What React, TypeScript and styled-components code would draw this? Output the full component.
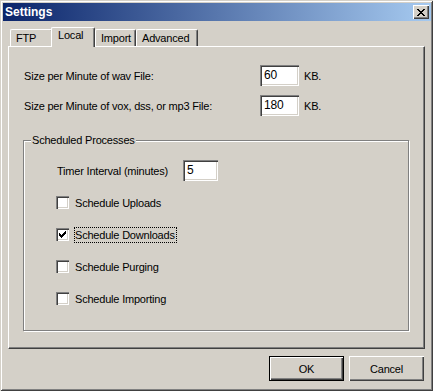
import React from 'react';
import styled, { createGlobalStyle, css } from 'styled-components';

const Global = createGlobalStyle`
  html, body { margin: 0; padding: 0; background: #d4d0c8; }
  body { font-family: "Liberation Sans", Arial, sans-serif; font-size: 11px; letter-spacing: -0.2px; color: #000; }
  * { box-sizing: border-box; }
`;

const FACE = '#d4d0c8';

const Window = styled.div`
  width: 433px;
  height: 391px;
  background: ${FACE};
  padding: 3px 2px 2px 3px;
  display: flex;
  flex-direction: column;
  box-shadow: inset 1px 1px ${FACE}, inset -1px -1px #404040, inset 2px 2px #fff, inset -2px -2px #808080;
`;

const TitleBar = styled.div`
  height: 18px;
  display: flex;
  align-items: center;
  padding: 0 2px 0 2px;
  background: linear-gradient(to right, #0a246a, #a6caf0);
  color: #fff;
  font-weight: bold;
  font-size: 12px;
  letter-spacing: 0;
`;

const TitleText = styled.span`
  flex: 1;
  line-height: 14px;
`;

const CloseButton = styled.div`
  width: 16px;
  height: 14px;
  background: ${FACE};
  display: flex;
  align-items: center;
  justify-content: center;
  box-shadow: inset 1px 1px #fff, inset -1px -1px #404040, inset -2px -2px #808080;
`;

const Body = styled.div`
  flex: 1;
  display: flex;
  flex-direction: column;
  padding: 6px 6px 0 5px;
`;

const TabStrip = styled.div`
  height: 19px;
  display: flex;
  align-items: flex-end;
  padding-left: 2px;
`;

const Tab = styled.div<{ $active?: boolean; $w: number }>`
  width: ${(p) => p.$w}px;
  height: 17px;
  padding: 2px 0 0 5px;
  border-top: 1px solid #fff;
  border-left: 1px solid #fff;
  border-right: 1px solid #404040;
  border-radius: 2px 2px 0 0;
  box-shadow: inset -1px 0 #808080;
  background: ${FACE};
  line-height: 13px;
  white-space: nowrap;
  ${(p) =>
    p.$active &&
    css`
      height: 20px;
      margin: 0 0 -1px -2px;
      padding: 1px 0 0 6px;
      position: relative;
      z-index: 1;
    `}
`;

const Panel = styled.div`
  width: 417px;
  height: 303px;
  border-top: 1px solid #fff;
  border-left: 1px solid #fff;
  border-right: 1px solid #404040;
  border-bottom: 1px solid #404040;
  box-shadow: inset -1px -1px #808080;
  padding: 18px 0 0 14px;
  display: flex;
  flex-direction: column;
`;

const SizeRow = styled.div`
  display: flex;
  align-items: center;
  height: 21px;
  padding-left: 1px;
  & + & { margin-top: 9px; }
`;

const SizeLabel = styled.span`
  width: 236px;
`;

const Edit = styled.div<{ $w: number }>`
  width: ${(p) => p.$w}px;
  height: 21px;
  background: #fff;
  padding: 3px 0 0 4px;
  line-height: 14px;
  font-size: 12px;
  box-shadow: inset 1px 1px #808080, inset 2px 2px #404040, inset -1px -1px #fff, inset -2px -2px ${FACE};
`;

const Unit = styled.span`
  margin-left: 5px;
`;

const Group = styled.div`
  position: relative;
  margin-top: 24px;
  width: 386px;
  height: 191px;
  border: 1px solid #808080;
  box-shadow: inset 1px 1px #fff, 1px 1px #fff;
  padding: 19px 0 0 32px;
  display: flex;
  flex-direction: column;
`;

const Legend = styled.span`
  position: absolute;
  top: -7px;
  left: 7px;
  padding: 0 1px;
  background: ${FACE};
  line-height: 13px;
`;

const TimerRow = styled.div`
  display: flex;
  align-items: center;
  height: 21px;
  margin-bottom: 15px;
`;

const TimerLabel = styled.span`
  width: 126px;
  margin-left: 1px;
`;

const CheckRow = styled.div`
  display: flex;
  align-items: center;
  height: 13px;
  & + & { margin-top: 19px; }
`;

const Box = styled.div`
  width: 13px;
  height: 13px;
  background: #fff;
  flex-shrink: 0;
  display: flex;
  align-items: center;
  justify-content: center;
  box-shadow: inset 1px 1px #808080, inset 2px 2px #404040, inset -1px -1px #fff, inset -2px -2px ${FACE};
`;

const CheckLabel = styled.span<{ $focus?: boolean }>`
  margin-left: 5px;
  padding: 0 1px 0 0;
  line-height: 14px;
  border: 1px ${(p) => (p.$focus ? 'dotted #000' : 'solid transparent')};
`;

const ButtonRow = styled.div`
  display: flex;
  justify-content: flex-end;
  gap: 5px;
  margin-top: 7px;
  padding-right: 1px;
`;

const Button = styled.div<{ $default?: boolean }>`
  width: 75px;
  height: 25px;
  display: flex;
  align-items: center;
  justify-content: center;
  background: ${FACE};
  box-shadow: inset 1px 1px #fff, inset -1px -1px #404040, inset -2px -2px #808080;
  ${(p) =>
    p.$default &&
    css`
      border: 1px solid #000;
    `}
`;

const Check = () => (
  <svg width="7" height="7" viewBox="0 0 7 7" shapeRendering="crispEdges">
    <path
      d="M6 0h1v1H6zM5 1h2v1H5zM0 2h1v1H0zM4 2h3v1H4zM0 3h2v1H0zM3 3h3v1H3zM0 4h5v1H0zM1 5h3v1H1zM2 6h1v1H2z"
      fill="#000"
    />
  </svg>
);

const CloseGlyph = () => (
  <svg width="8" height="7" viewBox="0 0 8 7" shapeRendering="crispEdges">
    <path
      d="M0 0h2v1H0zM6 0h2v1H6zM1 1h2v1H1zM5 1h2v1H5zM2 2h4v1H2zM3 3h2v1H3zM2 4h4v1H2zM1 5h2v1H1zM5 5h2v1H5zM0 6h2v1H0zM6 6h2v1H6z"
      fill="#000"
    />
  </svg>
);

const checks = [
  { label: 'Schedule Uploads', checked: false, focus: false },
  { label: 'Schedule Downloads', checked: true, focus: true },
  { label: 'Schedule Purging', checked: false, focus: false },
  { label: 'Schedule Importing', checked: false, focus: false },
];

export default function App() {
  return (
    <>
      <Global />
      <Window>
        <TitleBar>
          <TitleText>Settings</TitleText>
          <CloseButton>
            <CloseGlyph />
          </CloseButton>
        </TitleBar>
        <Body>
          <TabStrip>
            <Tab $w={43}>FTP</Tab>
            <Tab $w={44} $active>Local</Tab>
            <Tab $w={41}>Import</Tab>
            <Tab $w={62}>Advanced</Tab>
          </TabStrip>
          <Panel>
            <SizeRow>
              <SizeLabel>Size per Minute of wav File:</SizeLabel>
              <Edit $w={39}>60</Edit>
              <Unit>KB.</Unit>
            </SizeRow>
            <SizeRow>
              <SizeLabel>Size per Minute of vox, dss, or mp3 File:</SizeLabel>
              <Edit $w={39}>180</Edit>
              <Unit>KB.</Unit>
            </SizeRow>
            <Group>
              <Legend>Scheduled Processes</Legend>
              <TimerRow>
                <TimerLabel>Timer Interval (minutes)</TimerLabel>
                <Edit $w={35}>5</Edit>
              </TimerRow>
              {checks.map((c) => (
                <CheckRow key={c.label}>
                  <Box>{c.checked && <Check />}</Box>
                  <CheckLabel $focus={c.focus}>{c.label}</CheckLabel>
                </CheckRow>
              ))}
            </Group>
          </Panel>
          <ButtonRow>
            <Button $default>OK</Button>
            <Button>Cancel</Button>
          </ButtonRow>
        </Body>
      </Window>
    </>
  );
}
